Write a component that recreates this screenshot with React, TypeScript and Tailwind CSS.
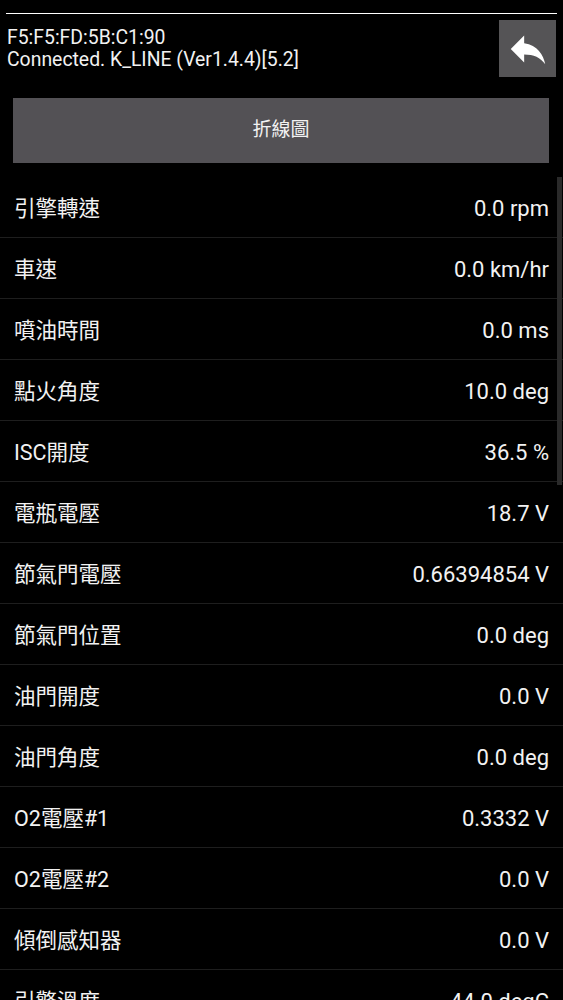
const rows: [string, string][] = [
  ["引擎轉速", "0.0 rpm"],
  ["車速", "0.0 km/hr"],
  ["噴油時間", "0.0 ms"],
  ["點火角度", "10.0 deg"],
  ["ISC開度", "36.5 %"],
  ["電瓶電壓", "18.7 V"],
  ["節氣門電壓", "0.66394854 V"],
  ["節氣門位置", "0.0 deg"],
  ["油門開度", "0.0 V"],
  ["油門角度", "0.0 deg"],
  ["O2電壓#1", "0.3332 V"],
  ["O2電壓#2", "0.0 V"],
  ["傾倒感知器", "0.0 V"],
  ["引擎溫度", "44.0 degC"],
];

function BackIcon() {
  return (
    <svg width="46" height="46" viewBox="0 0 24 24" fill="#ffffff">
      <path d="M10 9V5l-7 7 7 7v-4.1c5 0 8.5 1.6 11 5.1-1-5-4-10-11-11z" />
    </svg>
  );
}

export default function App() {
  return (
    <div className="h-[1000px] w-[563px] overflow-hidden bg-black font-['Roboto','Noto_Sans_CJK_TC',sans-serif] text-[#f2f2f2]">
      <div className="pt-[13px]">
        <div className="mx-[6px] h-px bg-white" />
      </div>

      {/* header */}
      <div className="mt-[6px] flex items-center justify-between pl-[7px] pr-[7px]">
        <div className="text-[19.4px] leading-[22px]">
          <div>F5:F5:FD:5B:C1:90</div>
          <div>Connected. K_LINE (Ver1.4.4)[5.2]</div>
        </div>
        <button className="flex h-[57px] w-[57px] items-center justify-center bg-[#555456]">
          <BackIcon />
        </button>
      </div>

      <div className="ml-[13px] mr-[14px] mt-[21px] flex h-[65px] items-center justify-center bg-[#535155] text-[19px]">
        折線圖
      </div>

      {/* list */}
      <div className="relative mt-[14px]">
        {rows.map(([label, value]) => (
          <div
            key={label}
            className="flex h-[61px] items-center justify-between border-b border-[#1e1e1e] pl-[14px] pr-[14px] pt-[2px]"
          >
            <span className="mt-[3px] text-[21.5px]">{label}</span>
            <span className="text-[22px]">{value}</span>
          </div>
        ))}
        <div className="absolute right-[1px] top-0 h-[308px] w-[5px] bg-[#2a2a2a]" />
      </div>
    </div>
  );
}
